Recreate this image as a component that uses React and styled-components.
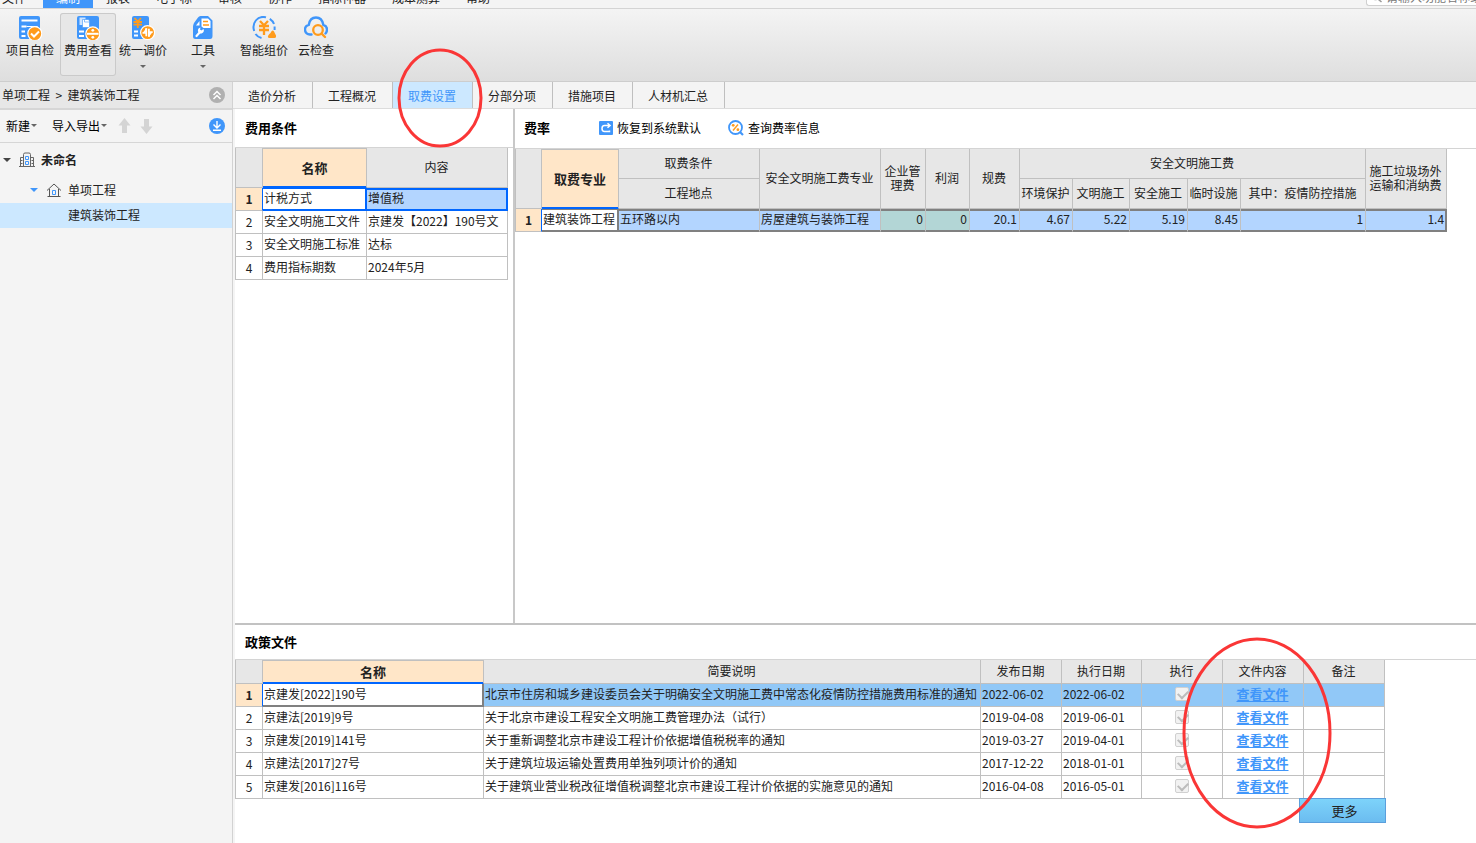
import styled, { createGlobalStyle, css } from 'styled-components';

const blue = '#4096fa';
const orange = '#ff9b1c';
const line = '#c0c0c0';
const focus = '#0066ff';

const GlobalStyle = createGlobalStyle`
  * {
    box-sizing: border-box;
  }

  body {
    margin: 0;
    color: #222;
    background: #fff;
    font-family: 'Noto Sans CJK SC', sans-serif;
    font-size: 12px;
    line-height: 14px;
  }

  button,
  input {
    margin: 0;
    padding: 0;
    border: none;
    background: none;
    color: inherit;
    font: inherit;
  }
`;

const Page = styled.div`
  display: flex;
  flex-direction: column;
  min-height: 100vh;
  overflow: hidden;
`;

// menu

const MenuBar = styled.nav`
  display: flex;
  align-items: flex-end;
  height: 9px;
  overflow: hidden;
  background: #f4f4f4;
  border-bottom: 1px solid #d4d4d4;
`;

const MenuItem = styled.button`
  flex: none;
  height: 20px;
  padding: 0 13px;
  white-space: nowrap;
  ${(props) =>
    props.$first &&
    css`
      display: flex;
      align-items: center;
      gap: 1px;
      width: 43px;
      padding: 0 0 0 2px;
    `}
  ${(props) =>
    props.$active &&
    css`
      color: #fff;
      background: ${blue};
    `}
`;

const SearchBox = styled.label`
  display: flex;
  align-items: center;
  gap: 4px;
  width: 110px;
  height: 18px;
  margin: 0 0 2px auto;
  padding-left: 4px;
  border: 1px solid #d0d0d0;
  border-right: none;
  border-radius: 3px 0 0 3px;
  background: #fff;

  svg {
    flex: none;
  }

  input {
    flex: 1;
    min-width: 0;
    outline: none;
  }

  input::placeholder {
    color: #777;
  }
`;

// ribbon

const Ribbon = styled.div`
  display: flex;
  height: 73px;
  padding-top: 4px;
  background: linear-gradient(#f4f4f4, #dedede);
  border-bottom: 1px solid #cdcdcd;
`;

const RibbonButton = styled.button`
  display: flex;
  flex-direction: column;
  align-items: center;
  width: ${(props) => props.$width}px;
  height: 63px;
  padding-top: 3px;
  border-radius: 3px;
  white-space: nowrap;
  ${(props) =>
    props.$active &&
    css`
      background: #e7e7e7;
      box-shadow: inset 0 0 0 1px #cacaca;
    `}

  span {
    margin: 3px 0 8px;
  }
`;

const Caret = styled.i`
  display: inline-block;
  border: 3px solid transparent;
  border-top-color: ${(props) => props.$color || '#666'};
  border-bottom: none;
  ${(props) =>
    props.$large &&
    css`
      border-width: 4px;
      border-bottom: none;
    `}
`;

// side panel

const Body = styled.div`
  display: flex;
  flex: 1;
`;

const Sidebar = styled.aside`
  flex: none;
  width: 233px;
  background: #f4f4f4;
  border-right: 1px solid #d2d2d2;
`;

const SideBar = styled.div`
  display: flex;
  align-items: center;
  height: ${(props) => (props.$crumb ? 28 : 33)}px;
  padding: 0 7px 1px ${(props) => (props.$crumb ? 2 : 6)}px;
  border-bottom: ${(props) => (props.$crumb ? 2 : 1)}px solid #d6d6d6;
  background: ${(props) => (props.$crumb ? '#e7e7e7' : '#f4f4f4')};
  color: #222;

  > :last-child {
    margin-left: auto;
  }
`;

const Crumb = styled.span`
  white-space: pre;
`;

const SideButton = styled.button`
  display: flex;
  align-items: center;
  gap: 1px;
  margin-right: ${(props) => props.$gap || 0}px;
  color: #000;
  white-space: nowrap;
`;

const Tree = styled.ul`
  margin: 0;
  padding: 0;
  list-style: none;
`;

const TreeItem = styled.li`
  display: flex;
  align-items: center;
  height: ${(props) => (props.$root ? 35 : 25)}px;
  padding-bottom: 2px;
  padding-left: ${(props) => props.$indent}px;
  font-weight: ${(props) => (props.$root ? 'bold' : 'normal')};
  background: ${(props) => (props.$selected ? '#cce8ff' : 'transparent')};

  svg {
    margin: 0 6px 0 8px;
  }
`;

// main area

const Main = styled.main`
  display: flex;
  flex: 1;
  flex-direction: column;
  min-width: 0;
`;

const Tabs = styled.div`
  display: flex;
  height: 27px;
  background: #f4f4f4;
  border-bottom: 1px solid #dcdcdc;
`;

const Tab = styled.button`
  position: relative;
  padding: 2px 16px 0 15px;
  border-right: 1px solid #bfbfbf;
  white-space: nowrap;
  color: ${(props) => (props.$active ? blue : '#222')};
  background: ${(props) => (props.$active ? '#cce8ff' : 'transparent')};
`;

const Content = styled.div`
  display: flex;
  flex: 1;
  flex-direction: column;
  border-left: 2px solid #f4f4f4;
`;

const Split = styled.div`
  display: flex;
  flex: 1;
  border-bottom: 2px solid #c2c2c2;
`;

const Panel = styled.section`
  position: relative;
  min-width: 0;
  ${(props) =>
    props.$side &&
    css`
      flex: none;
      width: 278px;
    `}
  ${(props) =>
    props.$main &&
    css`
      flex: 1;
      border-left: 2px solid #c8c8c8;
    `}
  ${(props) =>
    props.$bottom &&
    css`
      flex: none;
      height: 218px;
    `}
`;

const PanelHead = styled.header`
  display: flex;
  align-items: center;
  height: ${(props) => props.$height}px;
  padding-bottom: 1px;
  padding-left: ${(props) => props.$indent || 10}px;
  border-bottom: 1px solid #d4d4d4;
`;

const Title = styled.h2`
  margin: 0;
  color: #000;
  font-size: 13px;
`;

const Action = styled.button`
  display: flex;
  align-items: center;
  gap: 4px;
  margin-left: ${(props) => props.$gap}px;
  color: #000;
  white-space: nowrap;
`;

const Table = styled.table`
  width: ${(props) => props.$width}px;
  table-layout: fixed;
  border-collapse: separate;
  border-spacing: 0;
  border-left: 1px solid ${line};
`;

const Head = styled.th`
  height: ${(props) => props.$height}px;
  padding: 0 2px 2px 1px;
  border: solid ${line};
  border-width: 0 1px 1px 0;
  background: #e7e7e7;
  font-weight: normal;
  white-space: nowrap;
  ${(props) =>
    props.$active &&
    css`
      padding: 1px 1px 0;
      border-bottom-color: ${focus};
      background: #ffe6c8;
      box-shadow: inset 0 1px ${line}, inset 0 -1px ${focus};
      font-size: 13px;
      font-weight: bold;
    `}
`;

const RowNumber = styled.th`
  height: 23px;
  padding: 0;
  border: solid ${line};
  border-width: 0 1px 1px 0;
  font-weight: normal;
  ${(props) =>
    props.$active &&
    css`
      border-right-color: ${focus};
      background: #ffe6c8;
      font-weight: bold;
    `}
`;

const Cell = styled.td`
  height: 23px;
  padding: 0 2px 2px 1px;
  overflow: hidden;
  border: solid ${line};
  border-width: 0 1px 1px 0;
  background: ${(props) => props.$bg || '#fff'};
  text-align: ${(props) => props.$align || 'left'};
  white-space: nowrap;
  ${(props) =>
    props.$frame &&
    css`
      border-bottom-color: ${props.$frame};
      box-shadow: inset 0 2px ${props.$frame}, inset 0 -1px ${props.$frame};
    `}
  ${(props) =>
    props.$focus &&
    css`
      border-color: ${props.$focus};
      box-shadow: inset 0 ${props.$flat ? 0 : 1}px ${props.$focus}, inset -1px -1px ${props.$focus};
    `}
  ${(props) =>
    props.$end &&
    css`
      border-right-color: ${props.$frame};
      box-shadow: inset 0 2px ${props.$frame}, inset -1px -1px ${props.$frame};
    `}
`;

const Check = styled.input`
  position: relative;
  display: block;
  width: 14px;
  height: 14px;
  margin: 0 auto;
  border: 1px solid #d0d0d0;
  border-radius: 2px;
  background: #f2f2f2;
  appearance: none;

  &:checked::after {
    position: absolute;
    top: 2px;
    left: 2px;
    width: 8px;
    height: 5px;
    border: solid #bcbcbc;
    border-width: 0 0 2px 2px;
    content: '';
    transform: rotate(-45deg);
  }
`;

const FileLink = styled.a`
  color: ${blue};
  font-size: 13px;
  font-weight: bold;
  text-underline-offset: 2px;
`;

const MoreButton = styled.button`
  position: relative;
  display: block;
  width: 87px;
  height: 25px;
  margin-top: -1px;
  margin-left: 1064px;
  padding-left: 4px;
  border: 1px solid #5b9fdc;
  background: linear-gradient(#7dd3fa, #6bbcf0);
  font-size: 13px;
`;

const Ring = styled.svg`
  position: absolute;
  top: ${(props) => props.$top}px;
  left: ${(props) => props.$left}px;
  z-index: 2;
  pointer-events: none;
  fill: none;
  stroke: #fa3636;
  stroke-width: 3;
`;

// icons

function Badge({ cx, cy, children }) {
  return (
    <g fill="none" stroke="#fff" strokeWidth="1.6">
      <circle cx={cx} cy={cy} r="7" fill={orange} strokeWidth="1.2" />
      {children}
    </g>
  );
}

const icons = {
  selfCheck: (
    <>
      <rect x="1" y="0" width="21" height="23" rx="2" fill={blue} />
      <path d="M3.500 4.500h16M3.500 10.500h5M3.500 15.500h3.500M3.500 20h4" stroke="#fff" strokeWidth="2" />
      <path d="M8.500 10.500h11" stroke="#fff" strokeWidth="1" />
      <Badge cx={16.8} cy={17.600}>
        <path d="m13 17.500 3 3 5-5" strokeWidth="2" />
      </Badge>
    </>
  ),
  feeView: (
    <>
      <rect x="1" y="0" width="22" height="23" rx="2" fill={blue} />
      <path d="M3.500 1.500h6v7.500h-6z" fill="#cfe5ff" />
      <path d="M6.500 3.500h6l1 1.500v6.500h-7z" fill="#fff" stroke={blue} strokeWidth=".6" />
      <path d="M8.500 3.500v2.500H13" fill="none" stroke={blue} strokeWidth=".6" />
      <path d="M3 15.500h5M3 20h5" stroke="#fff" strokeWidth="2" />
      <Badge cx={16.8} cy={17.800}>
        <path d="M11 17.800h11.600" strokeWidth="2" />
        <circle cx="16.800" cy="14.300" r="1.400" fill="#fff" stroke="none" />
        <circle cx="16.800" cy="21.300" r="1.400" fill="#fff" stroke="none" />
      </Badge>
    </>
  ),
  adjust: (
    <>
      <rect x="1" y="0" width="17" height="23" rx="2" fill={blue} />
      <path d="m3.500 2 3.300 3.500L10 2M2.500 6h8.500M2.500 8.700h8.500M6.800 5.500V12" fill="none" stroke={orange} strokeWidth="1.800" />
      <path d="M3 15.500h4M3 19.500h4" stroke="#fff" strokeWidth="1.800" />
      <Badge cx={16.600} cy={16.600}>
        <path d="M11.500 17h3.500v-4.500M21.700 16H18v4.500" strokeWidth="1.400" />
        <path d="M15.300 12.300v8M17.900 12.800v8" strokeWidth="1.800" />
        <path d="m11.500 17 3.800-4.700V17zM21.700 16l-3.800 4.800V16z" fill="#fff" stroke="none" />
      </Badge>
    </>
  ),
  tools: (
    <>
      <path d="M9.500 0h7.500l4.500 4.500V20q0 3-2.500 3H4.500Q2 23 2 20.500v-10Q2 9 3 7l4-5.500Q8 0 9.500 0z" fill={blue} />
      <path d="M10.500 2.500h6.500l2.500 2.500v7h-7l-2-1.500z" fill="#fff" />
      <path d="M12 5.500h5M12 9h6" stroke={orange} strokeWidth="1.700" />
      <path d="M5 9.500 8.500 5v4.500z" fill="#fff" />
      <path d="m5.500 20 4-4.500" stroke="#fff" strokeWidth="2.200" strokeLinecap="round" />
      <path d="M12.500 13a3 3 0 1 1-3-1.500l-.5 2 1.300 1z" fill="#fff" />
    </>
  ),
  smart: (
    <>
      <path d="M14 1.300Q7.500-.2 3.800 4.500T2.200 15M3.500 18q2 3 6 4M17.800 2.800q3 2 4.200 5.200M22.600 10.500v3.500" fill="none" stroke={blue} strokeWidth="2" />
      <path d="m8 5 4 4.200L16 5M7 10h10M7 14h10M12 9v10" fill="none" stroke={orange} strokeWidth="2.300" />
      <path d="M20.500 14.500q1 0 1.500 1l2 4q.5 2.500-1.500 2.500h-5q-2 0-1.500-2 1-2 2.500-3 1-2.500 2-2.500z" fill={orange} />
    </>
  ),
  cloud: (
    <>
      <path d="M7.500 18.500H6Q1 18 1 13.500 1 10 4.800 8.800 6 1.500 12 1.500t7.300 7.300Q23 10 23 13.500q0 2.500-1.500 4" fill="none" stroke={blue} strokeWidth="2.400" strokeLinecap="round" />
      <circle cx="14" cy="14" r="4.800" fill="none" stroke={orange} strokeWidth="2.300" />
      <path d="m17.500 17.500 3.500 3.500" stroke={orange} strokeWidth="2.400" strokeLinecap="round" />
    </>
  ),
};

function RibbonIcon({ name }) {
  return (
    <svg width="24" height="24" viewBox="0 0 24 24" aria-hidden="true">
      {icons[name]}
    </svg>
  );
}

// data

const menus = ['文件', '编制', '报表', '电子标', '审核', '协作', '指标神器', '成本测算', '帮助'];

const ribbon = [
  { label: '项目自检', icon: 'selfCheck', width: 60 },
  { label: '费用查看', icon: 'feeView', width: 56, active: true },
  { label: '统一调价', icon: 'adjust', width: 54, menu: true },
  { label: '工具', icon: 'tools', width: 66, menu: true },
  { label: '智能组价', icon: 'smart', width: 56 },
  { label: '云检查', icon: 'cloud', width: 48 },
];

const tabs = ['造价分析', '工程概况', '取费设置', '分部分项', '措施项目', '人材机汇总'];

const conditions = [
  ['计税方式', '增值税'],
  ['安全文明施工文件', '京建发【2022】190号文'],
  ['安全文明施工标准', '达标'],
  ['费用指标期数', '2024年5月'],
];

const rateColumns = [26, 77, 141, 121, 45, 44, 50, 53, 57, 58, 53, 125, 81];
const rates = ['20.1', '4.67', '5.22', '5.19', '8.45', '1', '1.4'];

const policyColumns = [27, 221, 497, 81, 80, 81, 81, 81];
const policies = [
  ['京建发[2022]190号', '北京市住房和城乡建设委员会关于明确安全文明施工费中常态化疫情防控措施费用标准的通知', '2022-06-02', '2022-06-02'],
  ['京建法[2019]9号', '关于北京市建设工程安全文明施工费管理办法（试行）', '2019-04-08', '2019-06-01'],
  ['京建发[2019]141号', '关于重新调整北京市建设工程计价依据增值税税率的通知', '2019-03-27', '2019-04-01'],
  ['京建法[2017]27号', '关于建筑垃圾运输处置费用单独列项计价的通知', '2017-12-22', '2018-01-01'],
  ['京建发[2016]116号', '关于建筑业营业税改征增值税调整北京市建设工程计价依据的实施意见的通知', '2016-04-08', '2016-05-01'],
];

function Columns({ widths }) {
  return (
    <colgroup>
      {widths.map((width, i) => (
        <col key={i} width={width} />
      ))}
    </colgroup>
  );
}

function ConditionTable() {
  return (
    <Table $width={273}>
      <Columns widths={[27, 104, 141]} />
      <thead>
        <tr>
          <Head $height={40} />
          <Head $active>名称</Head>
          <Head>内容</Head>
        </tr>
      </thead>
      <tbody>
        {conditions.map(([name, value], i) => (
          <tr key={name}>
            <RowNumber $active={i === 0}>{i + 1}</RowNumber>
            <Cell $focus={i === 0 && focus}>{name}</Cell>
            <Cell $bg={i === 0 && '#b3d5ff'} $frame={i === 0 && focus} $end={i === 0}>
              {value}
            </Cell>
          </tr>
        ))}
      </tbody>
    </Table>
  );
}

function RateTable() {
  return (
    <Table $width={932}>
      <Columns widths={rateColumns} />
      <thead>
        <tr>
          <Head rowSpan={2} />
          <Head rowSpan={2} $active>取费专业</Head>
          <Head $height={30}>取费条件</Head>
          <Head rowSpan={2}>安全文明施工费专业</Head>
          <Head rowSpan={2}>企业管<br />理费</Head>
          <Head rowSpan={2}>利润</Head>
          <Head rowSpan={2}>规费</Head>
          <Head colSpan={5}>安全文明施工费</Head>
          <Head rowSpan={2}>施工垃圾场外<br />运输和消纳费</Head>
        </tr>
        <tr>
          <Head $height={30}>工程地点</Head>
          <Head>环境保护</Head>
          <Head>文明施工</Head>
          <Head>安全施工</Head>
          <Head>临时设施</Head>
          <Head>其中：疫情防控措施</Head>
        </tr>
      </thead>
      <tbody>
        <tr>
          <RowNumber $active>1</RowNumber>
          <Cell $focus="#808080">建筑装饰工程</Cell>
          <Cell $bg="#b3d5ff" $frame="#808080">五环路以内</Cell>
          <Cell $bg="#b3d5ff" $frame="#808080">房屋建筑与装饰工程</Cell>
          <Cell $bg="#b3d6d6" $frame="#808080" $align="right">0</Cell>
          <Cell $bg="#b3d6d6" $frame="#808080" $align="right">0</Cell>
          {rates.map((rate, i) => (
            <Cell key={rate} $bg="#b3d5ff" $frame="#808080" $align="right" $end={i === rates.length - 1}>
              {rate}
            </Cell>
          ))}
        </tr>
      </tbody>
    </Table>
  );
}

function PolicyTable() {
  return (
    <Table $width={1150}>
      <Columns widths={policyColumns} />
      <thead>
        <tr>
          <Head $height={24} />
          <Head $active>名称</Head>
          <Head>简要说明</Head>
          <Head>发布日期</Head>
          <Head>执行日期</Head>
          <Head>执行</Head>
          <Head>文件内容</Head>
          <Head>备注</Head>
        </tr>
      </thead>
      <tbody>
        {policies.map(([name, summary, issued, effective], i) => {
          const bg = i === 0 && '#91c8f7';
          return (
            <tr key={name}>
              <RowNumber $active={i === 0}>{i + 1}</RowNumber>
              <Cell $focus={i === 0 && '#808080'} $flat>{name}</Cell>
              <Cell $bg={bg}>{summary}</Cell>
              <Cell $bg={bg}>{issued}</Cell>
              <Cell $bg={bg}>{effective}</Cell>
              <Cell $bg={bg}>
                <Check type="checkbox" aria-label={`执行 ${name}`} defaultChecked disabled />
              </Cell>
              <Cell $bg={bg} $align="center">
                <FileLink href="#file">查看文件</FileLink>
              </Cell>
              <Cell $bg={bg} />
            </tr>
          );
        })}
      </tbody>
    </Table>
  );
}

function ProjectTree() {
  return (
    <Sidebar>
      <SideBar $crumb>
        <Crumb>{'单项工程  >  建筑装饰工程'}</Crumb>
        <SideButton aria-label="收起">
          <svg width="16" height="16" viewBox="0 0 16 16">
            <circle cx="8" cy="8" r="8" fill="#b0b0b0" />
            <path d="m4.500 8 3.500-3.500L11.500 8M4.500 12 8 8.500l3.500 3.500" fill="none" stroke="#fff" strokeWidth="1.500" />
          </svg>
        </SideButton>
      </SideBar>
      <SideBar>
        <SideButton $gap={15}>
          新建
          <Caret />
        </SideButton>
        <SideButton $gap={11}>
          导入导出
          <Caret />
        </SideButton>
        <SideButton $gap={9} aria-label="上移">
          <svg width="13" height="16" viewBox="0 0 13 16">
            <path d="M6.500 0 12.500 7.500H9V15H4V7.500H.5z" fill="#d4d4d4" />
          </svg>
        </SideButton>
        <SideButton aria-label="下移">
          <svg width="13" height="16" viewBox="0 0 13 16">
            <path d="M4 1h5v7.500h3.500L6.500 16 .5 8.500H4z" fill="#d4d4d4" />
          </svg>
        </SideButton>
        <SideButton aria-label="下载">
          <svg width="16" height="16" viewBox="0 0 16 16">
            <circle cx="8" cy="8" r="8" fill={blue} />
            <path d="M8 3v6.500M4.500 6.500 8 10l3.500-3.500M4 12.200h8" fill="none" stroke="#fff" strokeWidth="1.400" />
          </svg>
        </SideButton>
      </SideBar>
      <Tree>
        <TreeItem $root $indent={3}>
          <Caret $large $color="#444" />
          <svg width="16" height="16" viewBox="0 0 16 16" fill="none" stroke="#666">
            <path d="M0 14.500h16M4.500 14.500v-12q0-1.500 1.500-1.500h4q1.500 0 1.500 1.500v12M4.500 5.500h-3v9M11.500 5.500h3v9M1.500 8.500h2M1.500 11.500h2M12.500 8.500h2M12.500 11.500h2" />
            <path d="M6.500 4.500h3v3h-3zM6.500 9.500h3v3h-3z" stroke={blue} />
          </svg>
          未命名
        </TreeItem>
        <TreeItem $indent={30}>
          <Caret $large $color={blue} />
          <svg width="16" height="16" viewBox="0 0 16 16" fill="none" stroke="#555">
            <path d="M1 8.500 8 2l7 6.500M3.500 7v7.500h9V7M1.500 14.500h13" />
            <path d="M6.500 8.500h3v4h-3z" stroke={blue} />
          </svg>
          单项工程
        </TreeItem>
        <TreeItem $indent={68} $selected>
          建筑装饰工程
        </TreeItem>
      </Tree>
    </Sidebar>
  );
}

export default function App() {
  return (
    <Page>
      <GlobalStyle />
      <MenuBar>
        {menus.map((menu, i) => (
          <MenuItem key={menu} $first={i === 0} $active={i === 1}>
            {menu}
            {i === 0 && <Caret />}
          </MenuItem>
        ))}
        <SearchBox>
          <svg width="11" height="12" viewBox="0 0 11 12" fill="none" stroke="#999" strokeWidth="1.500">
            <circle cx="4.500" cy="5" r="3.500" />
            <path d="m7 8 3.500 3" />
          </svg>
          <input type="text" aria-label="搜索" placeholder="请输入功能名称或关键字" />
        </SearchBox>
      </MenuBar>
      <Ribbon>
        {ribbon.map((item) => (
          <RibbonButton key={item.label} $width={item.width} $active={item.active}>
            <RibbonIcon name={item.icon} />
            <span>{item.label}</span>
            {item.menu && <Caret />}
          </RibbonButton>
        ))}
      </Ribbon>
      <Body>
        <ProjectTree />
        <Main>
          <Tabs>
            {tabs.map((tab, i) => (
              <Tab key={tab} $active={i === 2}>
                {tab}
                {i === 2 && (
                  <Ring $top={-34} $left={4} width="86" height="100">
                    <ellipse cx="43" cy="50" rx="41" ry="48" />
                  </Ring>
                )}
              </Tab>
            ))}
          </Tabs>
          <Content>
            <Split>
              <Panel $side>
                <PanelHead $height={39}>
                  <Title>费用条件</Title>
                </PanelHead>
                <ConditionTable />
              </Panel>
              <Panel $main>
                <PanelHead $height={40} $indent={9}>
                  <Title>费率</Title>
                  <Action $gap={49}>
                    <svg width="14" height="14" viewBox="0 0 14 14">
                      <rect width="14" height="14" rx="1" fill={blue} />
                      <path d="M10.500 9.500v1h-5q-2.500 0-2.500-3t2.500-3h5M8.500 2.300l2.600 2.200-2.600 2.300" fill="none" stroke="#fff" strokeWidth="1.500" />
                    </svg>
                    恢复到系统默认
                  </Action>
                  <Action $gap={27}>
                    <svg width="16" height="16" viewBox="0 0 16 16" fill="none">
                      <circle cx="7.500" cy="7.500" r="6.500" stroke={blue} strokeWidth="1.800" />
                      <path d="m12 12 3 3" stroke={blue} strokeWidth="2.200" />
                      <path d="m5 10.500 5-6" stroke={orange} strokeWidth="1.400" />
                      <circle cx="5.200" cy="5.300" r="1.400" fill={orange} />
                      <circle cx="9.900" cy="9.700" r="1.400" fill={orange} />
                    </svg>
                    查询费率信息
                  </Action>
                </PanelHead>
                <RateTable />
              </Panel>
            </Split>
            <Panel $bottom>
              <PanelHead $height={35}>
                <Title>政策文件</Title>
              </PanelHead>
              <PolicyTable />
              <MoreButton>更多</MoreButton>
              <Ring $top={12} $left={947} width="150" height="192">
                <ellipse cx="75" cy="96" rx="73" ry="94" />
              </Ring>
            </Panel>
          </Content>
        </Main>
      </Body>
    </Page>
  );
}
